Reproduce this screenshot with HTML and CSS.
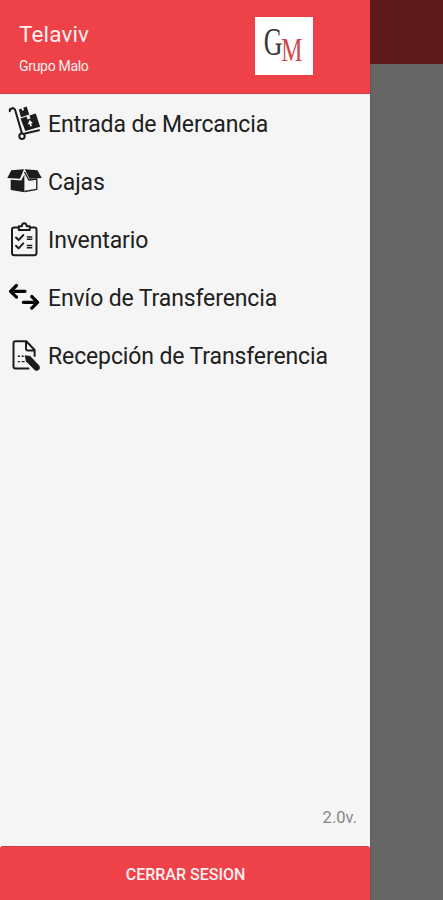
FILE: index.html
```html
<!DOCTYPE html>
<html lang="es">
<head>
<meta charset="utf-8">
<title>Telaviv</title>
<link rel="stylesheet" href="styles.css">
</head>
<body>
<div class="screen">
  <aside class="drawer">
    <header class="header">
      <div class="account">
        <h1 class="name">Telaviv</h1>
        <p class="group">Grupo Malo</p>
      </div>
      <svg class="logo" viewBox="0 0 58 58">
        <rect width="58" height="58" fill="#fff"/>
        <text class="logo-g" transform="translate(8.7 38) scale(.66 1)">G</text>
        <text class="logo-m" transform="translate(26.2 43.8) scale(.7 1)">M</text>
      </svg>
    </header>
    <nav class="menu">
      <a class="item">
        <svg class="icon" viewBox="0 0 32 32">
          <path class="line" d="M1.8 3.3V1.5L5 0l2 1.5 6.8 23.4M17 25.5l14-3.3"/>
          <circle class="line" cx="14" cy="28.3" r="2.7"/>
          <path d="M10.8 1.4l2.6-1 .8 2.4 1.8-.6-.7-2.5 3.4-1.2 2.5 8-8.2 2.7zM12.5 10.5l6-2 1 3 3-1-1-3 6.3-2.1 4.3 13.4-14.8 4.3z"/>
          <path fill="#f5f5f5" d="M21.6 12l3.3 3-1.7.5.7 2.4-1.7.5-.8-2.5-1.7.5z"/>
        </svg>
        <span class="label">Entrada de Mercancia</span>
      </a>
      <a class="item">
        <svg class="icon" viewBox="0 0 32 32">
          <path d="M3.3 4.2l12.7-.9-4 9.5-12.7-.9zM16.8 3.3l12.6.9L33.8 12l-12.4.8zM2.7 13.7l10.5.8 3.2-6v17.7L2.7 24z"/>
          <path class="thin" d="M16.5 25.5l12.3-2.2V13l-8 1-4.3-8"/>
        </svg>
        <span class="label">Cajas</span>
      </a>
      <a class="item">
        <svg class="icon" viewBox="0 0 32 32">
          <path class="line" d="M10.5 3.5H6Q4 3.5 4 5.5V29q0 2.2 2 2.2h20.5q2 0 2-2.2V5.5q0-2-2-2H22M10.8 6V2.3h3q.2-3 2.4-3t2.6 3h3V6z"/>
          <path class="line" d="M8 13.5l2.6 2.6 4.7-5M8 21.8l2.6 2.6 4.7-5"/>
          <path class="detail" d="M18.8 13h5.5M18.8 15.3h5.5M18.8 21.5h5.5M18.8 23.8h5.5"/>
        </svg>
        <span class="label">Inventario</span>
      </a>
      <a class="item">
        <svg class="icon" viewBox="0 0 32 32">
          <path class="heavy" d="M17 9.3H2.5M8.5 3.5L2.5 9.3l6 5.8M15.3 20.3h14.2M23.7 14.5l6 5.8-6 5.8"/>
        </svg>
        <span class="label">Envío de Transferencia</span>
      </a>
      <a class="item">
        <svg class="icon" viewBox="0 0 32 32">
          <path class="line" d="M20.5 28.4h-13q-2 0-2-2V3.2q0-2 2-2h10.8l8.3 8.8v6M18 2v6.5q0 2 2 2h6.3"/>
          <path class="detail" d="M9.8 16.2h2.1M13.6 16.2h2.1M9.8 21.6h2.1M13.6 21.6h3"/>
          <path d="M16.6 15.2l5.6.9 9 9.4q1.6 2.4-.2 4.3-2 1.9-4.4.1l-8.7-8.7z"/>
        </svg>
        <span class="label">Recepción de Transferencia</span>
      </a>
    </nav>
    <p class="version">2.0v.</p>
    <button class="logout">CERRAR SESION</button>
  </aside>
  <div class="scrim"><div class="toolbar"></div></div>
</div>
</body>
</html>
```
FILE: styles.css
```css
* { box-sizing: border-box; }
body { margin: 0; font-family: Roboto, sans-serif; background: #666; }
.screen { display: flex; width: 443px; height: 900px; overflow: hidden; }
.drawer { display: flex; flex-direction: column; width: 370px; background: #f5f5f5; }
.header {
  display: flex;
  justify-content: space-between;
  height: 94px;
  padding: 17px 57px 0 19px;
  background: #ee4248;
  border-bottom: 1px solid #cf3d45;
  color: #fff0f0;
}
.name { margin: 3px 0 0; font-size: 22.5px; font-weight: 400; line-height: 28px; letter-spacing: 0.15px; }
.group { margin: 9px 0 0; font-size: 14px; line-height: 18px; letter-spacing: -0.3px; }
.logo { width: 58px; height: 58px; margin-top: 0.4px; }
.logo-g, .logo-m { font-family: "Liberation Serif", serif; }
.logo-g { font-size: 39px; fill: #383838; }
.logo-m { font-size: 34px; fill: #cf454b; }
.menu { display: flex; flex-direction: column; padding-top: 1px; }
.item { display: flex; align-items: center; gap: 8px; height: 58px; padding-left: 8px; }
.icon { width: 32px; height: 32px; overflow: visible; fill: #1c1c1c; }
.line, .thin, .detail, .heavy { fill: none; stroke: #1c1c1c; stroke-linejoin: round; }
.line { stroke-width: 2; stroke-linecap: round; }
.thin { stroke-width: 1.3; }
.detail { stroke-width: 1.4; }
.heavy { stroke: #050505; stroke-width: 3.2; stroke-linecap: round; }
.label { padding-top: 2px; color: #202020; font-size: 23px; line-height: 30px; letter-spacing: -0.12px; white-space: nowrap; }
.version { margin: auto 13px 17px auto; color: #858585; font-size: 16.5px; line-height: 22px; }
.logout {
  height: 54px;
  padding: 2px 0 0 1px;
  border: 0;
  border-top: 1px solid #cf3d45;
  border-radius: 3px 3px 0 0;
  background: #ee4248;
  color: #fff0f0;
  font: 500 16px/22px Roboto, sans-serif;
}
.scrim { flex: 1; background: #666; border-left: 1px solid #5c5c5c; }
.toolbar { height: 64px; margin-left: -1px; background: #5e1a1c; }
```
